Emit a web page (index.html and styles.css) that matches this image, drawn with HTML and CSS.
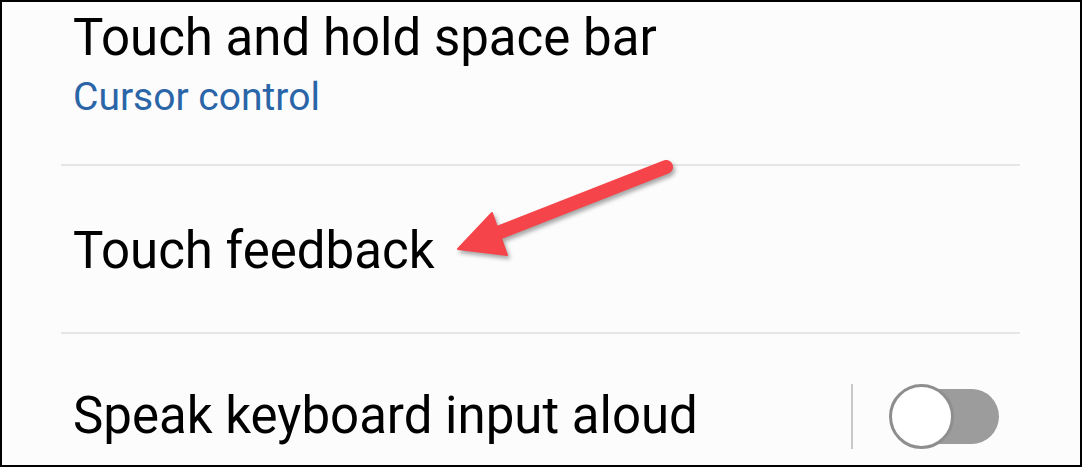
FILE: index.html
```html
<!DOCTYPE html>
<html>
<head>
    <title>Keyboard settings</title>
    <link rel="stylesheet" href="styles.css">
</head>
<body>
    <div class="screen">
        <div class="list">
            <div class="row row-first">
                <div class="row-text">
                    <div class="title">Touch and hold space bar</div>
                    <div class="summary">Cursor control</div>
                </div>
            </div>
            <div class="divider"></div>
            <div class="row row-single">
                <div class="row-text">
                    <div class="title">Touch feedback</div>
                </div>
            </div>
            <div class="divider"></div>
            <div class="row row-switch">
                <div class="row-text">
                    <div class="title">Speak keyboard input aloud</div>
                </div>
                <div class="switch-sep"></div>
                <div class="switch">
                    <div class="switch-thumb"></div>
                </div>
            </div>
        </div>

        <!-- callout arrow pointing at the touch feedback item -->
        <svg class="callout" width="1082" height="467" viewBox="0 0 1082 467">
            <line x1="666" y1="167" x2="490" y2="236" stroke="#f5444a" stroke-width="14" stroke-linecap="round"/>
            <polygon points="458,249 492,213 507,255" fill="#f5444a" stroke="#f5444a" stroke-width="2" stroke-linejoin="round"/>
        </svg>
    </div>
</body>
</html>
```

FILE: styles.css
```css
body {
    margin: 0;
    font-family: Roboto, "Liberation Sans", sans-serif;
}
.screen {
    position: relative;
    width: 1082px;
    height: 467px;
    box-sizing: border-box;
    border: 2px solid #000;
    background: #fcfcfc;
    overflow: hidden;
}
.list {
    display: flex;
    flex-direction: column;
    padding: 0 60px 0 59px;
}
.row {
    display: flex;
    padding: 0 0 0 12px;
    flex-shrink: 0;
}
.row-first {
    height: 162px;
    align-items: flex-start;
}
.row-single {
    height: 166px;
    align-items: flex-start;
    box-sizing: border-box;
    padding-top: 55px;
}
.row-switch {
    height: 164px;
    align-items: center;
}
.title {
    font-size: 51px;
    line-height: 60px;
    color: #000;
}
.row-first .title {
    margin-top: 6px;
}
.summary {
    font-size: 39px;
    line-height: 58px;
    color: #2a65a8;
}
.divider {
    height: 2px;
    background: #e6e6e6;
    flex-shrink: 0;
}
.row-text {
    flex: 1;
}
.switch-sep {
    width: 2px;
    height: 65px;
    background: #c8c8c8;
    margin-right: 40px;
}
.switch {
    width: 106px;
    height: 55px;
    border-radius: 28px;
    background: #9c9c9c;
    margin-right: 21px;
    display: flex;
    align-items: center;
}
.switch-thumb {
    width: 59px;
    height: 59px;
    flex-shrink: 0;
    border-radius: 50%;
    background: #fff;
    border: 3px solid #8e8e8e;
    margin-left: -4px;
}
.callout {
    position: absolute;
    left: -2px;
    top: -2px;
    filter: drop-shadow(2px 3px 2px rgba(0, 0, 0, 0.35));
}
```
